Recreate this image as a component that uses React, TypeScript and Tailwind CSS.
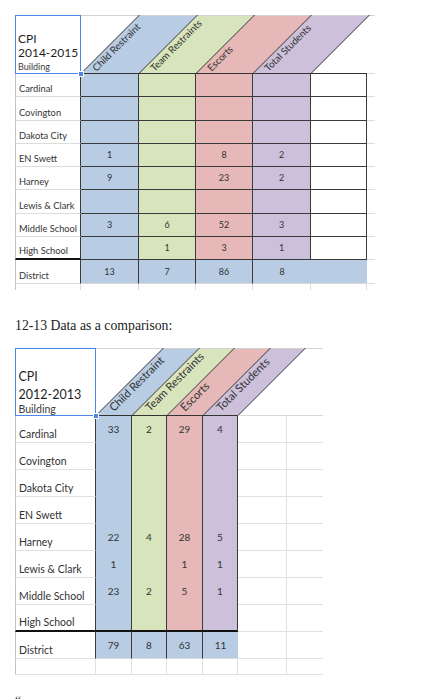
import React from "react";

const BLUE = "#b8cce4";
const GREEN = "#d8e4bc";
const RED = "#e6b8b7";
const PURPLE = "#ccc0da";
const LABELS = ["Child Restraint", "Team Restraints", "Escorts", "Total Students"];

// slanted column headers, drawn like Excel's 45° rotated header cells
const SlantHeader = ({
  w,
  h,
  offs,
  darkTo,
  dx,
  dy,
  size,
}: {
  w: number;
  h: number;
  offs: number[];
  darkTo: number;
  dx: number;
  dy: number;
  size: number;
}) => {
  const fills = [BLUE, GREEN, RED, PURPLE];
  return (
    <svg width={w} height={h} className="block shrink-0">
      {fills.map((f, i) => {
        const a = offs[i] - 0.5;
        const b = offs[i + 1] - 0.5;
        return <polygon key={f} points={`${a},${h} ${b},${h} ${b + h},0 ${a + h},0`} fill={f} />;
      })}
      <line x1={0} y1={0.5} x2={w} y2={0.5} stroke="#d2d2d2" />
      {offs.slice(0, 5).map((x) => (
        <line key={x} x1={x - 0.5} y1={h} x2={x - 0.5 + h} y2={0} stroke="#333" strokeWidth={1} />
      ))}
      <line x1={0} y1={h - 0.5} x2={darkTo} y2={h - 0.5} stroke="#333" />
      <line x1={darkTo} y1={h - 0.5} x2={w} y2={h - 0.5} stroke="#d9d9d9" />
      {LABELS.map((t, i) => {
        const x = offs[i] + dx;
        const y = h - dy;
        return (
          <text
            key={t}
            x={x}
            y={y}
            transform={`rotate(-45 ${x} ${y})`}
            fontSize={size}
            fontFamily="Lato, 'Liberation Sans', sans-serif"
            fill="#333"
          >
            {t}
          </text>
        );
      })}
    </svg>
  );
};

const rows14 = [
  ["Cardinal", "", "", "", ""],
  ["Covington", "", "", "", ""],
  ["Dakota City", "", "", "", ""],
  ["EN Swett", "1", "", "8", "2"],
  ["Harney", "9", "", "23", "2"],
  ["Lewis & Clark", "", "", "", ""],
  ["Middle School", "3", "6", "52", "3"],
  ["High School", "", "1", "3", "1"],
];

const rows12 = [
  ["Cardinal", "33", "2", "29", "4"],
  ["Covington", "", "", "", ""],
  ["Dakota City", "", "", "", ""],
  ["EN Swett", "", "", "", ""],
  ["Harney", "22", "4", "28", "5"],
  ["Lewis & Clark", "1", "", "1", "1"],
  ["Middle School", "23", "2", "5", "1"],
  ["High School", "", "", "", ""],
];

const w14 = ["w-[58px]", "w-[57px]", "w-[57px]", "w-[58px]", "w-[56px]"];
const bg14 = ["bg-[#b8cce4]", "bg-[#d8e4bc]", "bg-[#e6b8b7]", "bg-[#ccc0da]", "bg-white"];

const w12 = ["w-[36px]", "w-[35px]", "w-[36px]", "w-[35px]"];
const bg12 = ["bg-[#b8cce4]", "bg-[#d8e4bc]", "bg-[#e6b8b7]", "bg-[#ccc0da]"];

const Table2014 = () => (
  <div className="flex flex-col">
    <div className="flex h-[59px]">
      <div className="relative flex w-[66px] shrink-0 flex-col border-[1.5px] border-[#4d88e6] pl-[2px] pt-[16px] text-[#1f1f1f] whitespace-nowrap">
        <span className="text-[12px] leading-[14px]">CPI</span>
        <span className="text-[12px] leading-[14px]">2014-2015</span>
        <span className="mt-[1px] text-[9px] leading-[12px] text-[#3a3a3a]">Building</span>
        <span className="absolute -right-[3.5px] -bottom-[3.5px] h-[6px] w-[6px] border border-white bg-[#4d88e6]" />
      </div>
      <SlantHeader w={294} h={59} offs={[0, 58, 115, 172, 230, 286]} darkTo={286} dx={15.5} dy={2} size={9.8} />
    </div>

    {rows14.map(([name, ...vals], r) => (
      <div key={name} className="flex h-[23.25px]">
        <div
          className={`flex w-[66px] shrink-0 items-end whitespace-nowrap border-l border-r border-l-[#c2c2c2] border-r-[#3a3a3a] pb-[1px] pl-[3px] text-[9.3px] leading-[12px] ${
            r === 7 ? "border-b-2 border-b-[#111]" : "border-b border-b-[#dcdcdc]"
          }`}
        >
          {name}
        </div>
        {w14.map((w, i) => (
          <div
            key={i}
            className={`flex ${w} shrink-0 items-center justify-center border-r border-b border-[#3a3a3a] ${bg14[i]} text-[9px]`}
          >
            {vals[i]}
          </div>
        ))}
        <div className="w-[8px] shrink-0 border-b border-b-[#dcdcdc]" />
      </div>
    ))}

    {/* District totals */}
    <div className="flex h-[23.5px]">
      <div className="flex w-[66px] shrink-0 items-end border-l border-r border-b border-l-[#c2c2c2] border-r-[#3a3a3a] border-b-[#dcdcdc] pb-[1px] pl-[3px] text-[9.3px] leading-[12px]">
        District
      </div>
      {w14.map((w, i) => (
        <div
          key={i}
          className={`flex ${w} shrink-0 items-center justify-center border-b border-b-[#d6d6d6] bg-[#b8cce4] text-[9px] ${
            i < 3 ? "border-r border-r-[#3a3a3a]" : ""
          }`}
        >
          {["13", "7", "86", "8", ""][i]}
        </div>
      ))}
      <div className="w-[8px] shrink-0 border-b border-b-[#dcdcdc]" />
    </div>

    <div className="flex h-[6px]">
      <div className="w-[66px] shrink-0 border-l border-r border-[#dcdcdc] border-l-[#c2c2c2]" />
      {w14.map((w, i) => (
        <div key={i} className={`${w} shrink-0 border-r border-[#dcdcdc]`} />
      ))}
    </div>
  </div>
);

const Table2012 = () => (
  <div className="flex flex-col">
    <div className="flex h-[68px]">
      <div className="relative flex w-[81px] shrink-0 flex-col whitespace-nowrap border-[1.5px] border-[#4d88e6] pl-[2.5px] pt-[18.5px] text-[#1f1f1f]">
        <span className="text-[12.5px] leading-[18px]">CPI</span>
        <span className="text-[12.5px] leading-[18px]">2012-2013</span>
        <span className="text-[10.5px] leading-[11px] text-[#3a3a3a]">Building</span>
        <span className="absolute -right-[3.5px] -bottom-[3.5px] h-[6px] w-[6px] border border-white bg-[#4d88e6]" />
      </div>
      <SlantHeader w={227} h={68} offs={[0, 36, 71, 107, 142]} darkTo={142} dx={18} dy={4} size={11.2} />
    </div>

    {rows12.map(([name, ...vals], r) => (
      <div key={name} className="flex h-[27px]">
        <div
          className={`flex w-[81px] shrink-0 items-end whitespace-nowrap border-l border-r border-l-[#c2c2c2] border-r-[#3a3a3a] pb-[1px] pl-[3px] text-[10.5px] leading-[13px] ${
            r === 7 ? "border-b-2 border-b-[#111]" : "border-b border-b-[#e0e0e0]"
          }`}
        >
          {name}
        </div>
        {w12.map((w, i) => (
          <div
            key={i}
            className={`flex ${w} shrink-0 items-center justify-center border-r border-r-[#3a3a3a] ${bg12[i]} text-[10px] ${
              r === 7 ? "border-b-2 border-b-[#111]" : ""
            }`}
          >
            {vals[i]}
          </div>
        ))}
        <div className="w-[49px] shrink-0 border-r border-b border-[#e0e0e0]" />
        <div className="w-[36px] shrink-0 border-b border-[#e0e0e0]" />
      </div>
    ))}

    {/* District totals */}
    <div className="flex h-[27px]">
      <div className="flex w-[81px] shrink-0 items-end border-l border-r border-b border-l-[#c2c2c2] border-r-[#3a3a3a] border-b-[#e0e0e0] pb-[1px] pl-[3px] text-[10.5px] leading-[13px]">
        District
      </div>
      {w12.map((w, i) => (
        <div
          key={i}
          className={`flex ${w} shrink-0 items-center justify-center border-b border-b-[#dadada] bg-[#b8cce4] text-[10px] ${
            i < 3 ? "border-r border-r-[#3a3a3a]" : ""
          }`}
        >
          {["79", "8", "63", "11"][i]}
        </div>
      ))}
      <div className="w-[49px] shrink-0 border-r border-b border-[#e0e0e0]" />
      <div className="w-[36px] shrink-0 border-b border-[#e0e0e0]" />
    </div>

    <div className="flex h-[16px]">
      <div className="w-[81px] shrink-0 border-l border-r border-b border-[#e0e0e0] border-l-[#c2c2c2]" />
      {w12.map((w, i) => (
        <div key={i} className={`${w} shrink-0 border-r border-b border-[#e0e0e0]`} />
      ))}
      <div className="w-[49px] shrink-0 border-r border-b border-[#e0e0e0]" />
      <div className="w-[36px] shrink-0 border-b border-[#e0e0e0]" />
    </div>
  </div>
);

export default function App() {
  return (
    <div className="min-h-screen overflow-hidden bg-white pt-[15px] pl-[15px] font-['Lato',sans-serif] text-[#333]">
      <Table2014 />
      <p className="mt-[26px] font-['Liberation_Serif',serif] text-[13.75px] leading-[20px] text-[#222]">
        12-13 Data as a comparison:
      </p>
      <div className="mt-[12.5px]">
        <Table2012 />
      </div>
      <p className="mt-[17px] font-['Liberation_Serif',serif] text-[13.75px] leading-[20px] text-[#222]">“</p>
    </div>
  );
}
